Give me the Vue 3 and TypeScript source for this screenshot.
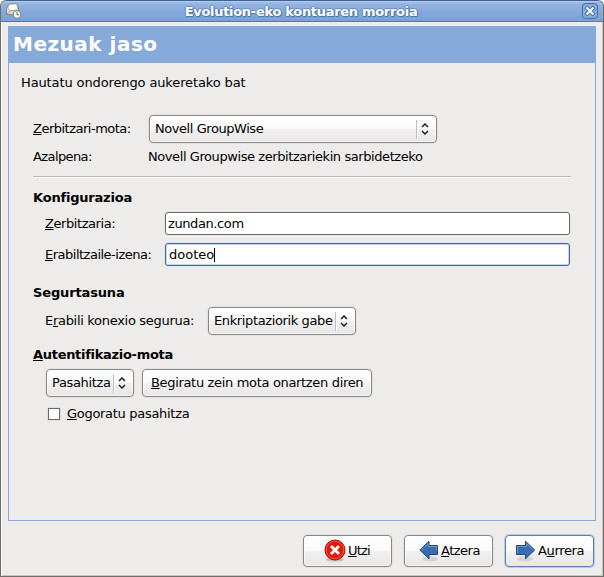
<script setup lang="ts">
import { ref } from 'vue'

const server = ref('zundan.com')
const user = ref('dooteo')
const remember = ref(false)
</script>

<template>
  <div class="window">
    <header class="titlebar">
      <svg class="app-icon" width="18" height="18" viewBox="0 0 18 18">
        <path d="M1.500 6.500 L4 2 L12 1.500 L13.500 6 L13 13 L1.500 12.500Z" fill="#dddbd4" stroke="#85827b" />
        <path d="M4 2.500 L11.500 2 L12.500 7 L7.500 9 L3 7Z" fill="#fff" stroke="#b4b1a9" stroke-width=".7" />
        <path d="M2 12 L6 8.500 H9 L13 12" fill="none" stroke="#a8a69f" />
        <circle cx="12" cy="12.500" r="3.800" fill="#fafafa" stroke="#7d8086" stroke-width="1.100" />
        <path d="M12 10 V12.800 H14" fill="none" stroke="#666" />
      </svg>
      <h1 class="title">Evolution-eko kontuaren morroia</h1>
      <button class="close" aria-label="Itxi">
        <svg width="16" height="16" viewBox="0 0 16 16">
          <rect x=".5" y=".5" width="15" height="15" rx="3" fill="#86abda" stroke="#456ca2" />
          <path d="M5.300 5.300 L10.700 10.700 M10.700 5.300 L5.300 10.700" stroke="#4a70a5" stroke-width="4" stroke-linecap="square" />
          <path d="M5.300 5.300 L10.700 10.700 M10.700 5.300 L5.300 10.700" stroke="#f4f7fb" stroke-width="2.200" stroke-linecap="square" />
        </svg>
      </button>
    </header>

    <main class="panel">
      <h2 class="heading"><span>Mezuak jaso</span></h2>
      <div class="content">
        <p class="intro">Hautatu ondorengo aukeretako bat</p>

        <section class="form">
          <div class="row type-row">
            <label class="type-label"><u>Z</u>erbitzari-mota:</label>
            <button class="btn combo combo-wide">
              <span class="val-wide">Novell GroupWise</span>
              <i class="sep"></i>
              <svg class="arrows" width="8" height="12" viewBox="0 0 8 12"><path d="M1 4 L4 1 L7 4 M1 8 L4 11 L7 8" /></svg>
            </button>
          </div>
          <div class="row desc-row">
            <span class="desc-label">Azalpena:</span>
            <span class="desc">Novell Groupwise zerbitzariekin sarbidetzeko</span>
          </div>
          <hr class="rule" />

          <h3 class="sub conf">Konfigurazioa</h3>
          <div class="row field">
            <label class="field-label server-label"><u>Z</u>erbitzaria:</label>
            <div class="entry"><span class="server-val">{{ server }}</span></div>
          </div>
          <div class="row field second">
            <label class="field-label user-label"><u>E</u>rabiltzaile-izena:</label>
            <div class="entry focused"><span class="user-val">{{ user }}</span><i class="caret"></i></div>
          </div>

          <h3 class="sub security">Segurtasuna</h3>
          <div class="row secure-row">
            <label class="secure-label">E<u>r</u>abili konexio segurua:</label>
            <button class="btn combo combo-secure">
              <span class="val-secure">Enkriptaziorik gabe</span>
              <i class="sep"></i>
              <svg class="arrows" width="8" height="12" viewBox="0 0 8 12"><path d="M1 4 L4 1 L7 4 M1 8 L4 11 L7 8" /></svg>
            </button>
          </div>

          <h3 class="sub auth"><u>A</u>utentifikazio-mota</h3>
          <div class="row auth-row">
            <button class="btn combo combo-auth">
              <span class="val-auth">Pasahitza</span>
              <i class="sep"></i>
              <svg class="arrows" width="8" height="12" viewBox="0 0 8 12"><path d="M1 4 L4 1 L7 4 M1 8 L4 11 L7 8" /></svg>
            </button>
            <button class="btn check-types"><span class="val-check"><u>B</u>egiratu zein mota onartzen diren</span></button>
          </div>
          <div class="row remember" @click="remember = !remember">
            <i class="box" :class="{ on: remember }"></i>
            <span class="remember-text"><u>G</u>ogoratu pasahitza</span>
          </div>
        </section>
      </div>
    </main>

    <footer class="actions">
      <button class="btn action">
        <svg class="icon" width="22" height="24" viewBox="0 0 22 24">
          <ellipse cx="11" cy="20.500" rx="9" ry="2" fill="#000" opacity=".18" />
          <circle cx="11" cy="11" r="10" fill="#e01b0c" stroke="#a90b05" />
          <circle cx="11" cy="11" r="8.800" fill="none" stroke="#f4685c" stroke-width=".8" />
          <path d="M7 7 L15 15 M15 7 L7 15" stroke="#fff" stroke-width="2.800" />
        </svg>
        <span class="t-utzi"><u>U</u>tzi</span>
      </button>
      <button class="btn action">
        <svg class="icon" width="20" height="22" viewBox="0 0 20 22">
          <ellipse cx="11" cy="19" rx="8" ry="2.500" fill="#000" opacity=".1" />
          <path d="M.8 10 L10 1.200 V5.500 H18.500 V14.500 H10 V18.800Z" fill="#3a6db0" stroke="#1f4887" />
          <path d="M2.500 10 L9 3.600 V6.500 H17.500 V10" fill="none" stroke="#7ea3d3" stroke-width=".8" />
        </svg>
        <span class="t-atzera"><u>A</u>tzera</span>
      </button>
      <button class="btn action default">
        <svg class="icon" width="20" height="22" viewBox="0 0 20 22">
          <ellipse cx="9" cy="19" rx="8" ry="2.500" fill="#000" opacity=".1" />
          <path d="M18.700 10 L9.500 1.200 V5.500 H.5 V14.500 H9.500 V18.800Z" fill="#3a6db0" stroke="#1f4887" />
          <path d="M17 10 L10.500 3.600 V6.500 H1.500 V13" fill="none" stroke="#7ea3d3" stroke-width=".8" />
        </svg>
        <span class="t-aurrera">A<u>u</u>rrera</span>
      </button>
    </footer>
  </div>
</template>

<style>
body {
  background: #fff;
  overflow: hidden;
}
</style>

<style scoped>
* {
  box-sizing: border-box;
  margin: 0;
}
.window {
  width: 604px;
  height: 577px;
  background: #edeceb;
  border: 1px solid #716d6a;
  border-top: 0;
  border-radius: 6px 6px 0 0;
  box-shadow: inset 1px 0 #fbfbfa, inset -1px -1px #c9c6c3;
  font: 13px/16px 'DejaVu Sans', sans-serif;
  color: #000;
  white-space: nowrap;
  overflow: hidden;
}
.titlebar {
  height: 22px;
  margin: 0 -1px;
  display: flex;
  align-items: center;
  padding: 0 5px;
  border: 1px solid #3f6297;
  border-bottom-color: #5679aa;
  border-radius: 6px 6px 0 0;
  background: linear-gradient(#a9c4e8, #94b4e0 15%, #84a8d9 55%, #7ba1d3);
  box-shadow: inset 0 1px #b3caea;
}
.app-icon {
  flex: none;
  margin-left: -1px;
}
.title {
  flex: 1;
  text-align: center;
  font-size: 13px;
  line-height: 16px;
  letter-spacing: -0.3px;
  color: #fff;
  padding: 1px 3px 0 0;
  text-shadow: 1px 0 #5276ab, -1px 0 #6388bd, 0 1px #5276ab, 0 -1px #6c90c4, 1px 1px #5276ab;
}
.close {
  width: 16px;
  height: 16px;
  padding: 0;
  border: 0;
  background: none;
}
.close svg {
  display: block;
}
.panel {
  margin: 4px 7px 0;
  height: 495px;
  border: 1px solid #85aad9;
}
.heading {
  height: 37px;
  margin: -1px -1px 0;
  padding: 5px 0 0 5px;
  background: #85aad9;
  color: #fff;
  font-size: 20px;
  letter-spacing: 0.5px;
  line-height: 26px;
}
.content {
  padding: 12px 24px 0 12px;
}
.intro {
  letter-spacing: -0.12px;
}
.form {
  padding: 24px 0 0 12px;
}
.row {
  display: flex;
  align-items: center;
}
.btn {
  display: flex;
  align-items: center;
  height: 28px;
  border: 1px solid #8b8785;
  border-radius: 4px;
  padding: 0 7px 0 5px;
  background: linear-gradient(#fff, #fafafa 48%, #f1f0f0 52%, #e8e7e6);
  box-shadow: 0 0 0 1px #e4e2e0, inset 0 0 0 1px #fff9;
  font: inherit;
  color: inherit;
}
u {
  text-underline-offset: 1px;
  text-decoration-thickness: 1px;
  text-decoration-skip-ink: none;
}
.sep {
  width: 2px;
  height: 19px;
  margin-left: auto;
  border-left: 1px solid #c1bebb;
  border-right: 1px solid #fff;
}
.arrows {
  flex: none;
  margin-left: 3px;
  fill: none;
  stroke: #222;
  stroke-width: 1.5;
}
.type-row {
  height: 28px;
}
.type-label {
  width: 116px;
  letter-spacing: -0.5px;
}
.combo-wide {
  width: 288px;
}
.val-wide {
  letter-spacing: -0.44px;
}
.desc-row {
  margin-top: 6px;
}
.desc-label {
  width: 115px;
  letter-spacing: -0.6px;
}
.desc {
  letter-spacing: -0.42px;
}
.rule {
  height: 2px;
  margin-top: 11px;
  border: 0;
  border-top: 1px solid #bdbab7;
  border-bottom: 1px solid #fff;
}
.sub {
  font-size: 13px;
  line-height: 16px;
}
.conf {
  margin-top: 12px;
  letter-spacing: -0.2px;
}
.field {
  height: 23px;
  margin-top: 6px;
  padding-left: 12px;
}
.second {
  margin-top: 8px;
}
.field-label {
  width: 120px;
}
.server-label {
  letter-spacing: -0.43px;
}
.user-label {
  letter-spacing: -0.5px;
}
.entry {
  width: 405px;
  height: 23px;
  display: flex;
  align-items: center;
  padding-left: 2px;
  background: #fff;
  border: 1px solid #6d6967;
  border-radius: 3px;
  box-shadow: 0 0 0 1px #e6e4e2, 0 1px 0 1px #f5f5f4;
}
.server-val {
  letter-spacing: -0.4px;
}
.entry.focused {
  padding-left: 3px;
  border-color: #466a9f;
  box-shadow: inset 0 0 0 1px #bfd6f0, 0 0 0 1px #e4e4e4;
}
.caret {
  width: 1px;
  height: 14px;
  background: #000;
}
.security {
  margin-top: 19px;
  letter-spacing: -0.14px;
}
.secure-row {
  margin-top: 6px;
  padding-left: 12px;
}
.secure-label {
  width: 163px;
  letter-spacing: -0.3px;
}
.combo-secure {
  width: 148px;
}
.val-secure {
  letter-spacing: -0.38px;
}
.auth {
  margin-top: 12px;
  letter-spacing: -0.3px;
}
.auth-row {
  margin-top: 6px;
  padding-left: 13px;
  gap: 8px;
}
.combo-auth {
  width: 88px;
}
.val-auth {
  letter-spacing: -0.35px;
}
.check-types {
  width: 230px;
  padding-left: 8px;
}
.val-check {
  letter-spacing: -0.33px;
}
.remember {
  margin-top: 9px;
  padding-left: 15px;
  gap: 7px;
}
.remember-text {
  letter-spacing: -0.3px;
}
.box {
  width: 12px;
  height: 12px;
  border: 1px solid #6d6967;
  background: #fff;
  box-shadow: 0 0 0 1px #e2e0de;
}
.box.on {
  background: #85aad9;
}
.actions {
  display: flex;
  justify-content: flex-end;
  gap: 12px;
  padding: 14px 9px 0 0;
}
.action {
  width: 89px;
  height: 32px;
  padding: 0 0 0 20px;
}
.action + .action {
  padding-left: 14px;
}
.action.default {
  padding-left: 10px;
  border-color: #5c80b4;
  box-shadow: 0 0 0 1px #b5cae6;
}
.icon {
  flex: none;
  margin-right: 2px;
}
.t-utzi {
  letter-spacing: -0.8px;
}
.t-atzera {
  letter-spacing: -0.5px;
}
.t-aurrera {
  letter-spacing: -0.35px;
}
</style>
